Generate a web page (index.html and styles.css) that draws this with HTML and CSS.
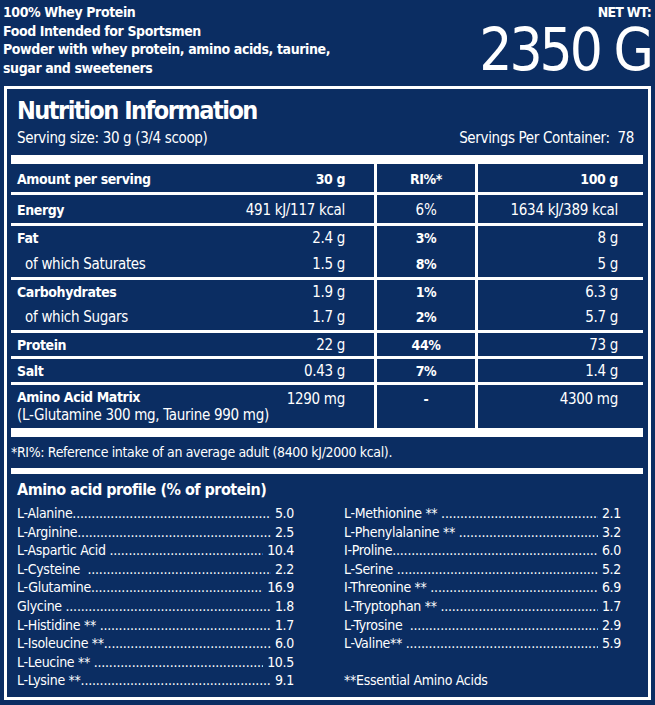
FILE: index.html
```html
<!DOCTYPE html>
<html lang="en">
<head>
<meta charset="utf-8">
<title>100% Whey Protein – Nutrition Information</title>
<link rel="stylesheet" href="styles.css">
</head>
<body>
<div class="page">
  <header class="top">
    <div class="desc">
      <div>100% Whey Protein</div>
      <div>Food Intended for Sportsmen</div>
      <div>Powder with whey protein, amino acids, taurine,</div>
      <div>sugar and sweeteners</div>
    </div>
    <div class="net">
      <div class="net-label">NET WT:</div>
      <div class="net-value">2350 G</div>
    </div>
  </header>

  <section class="panel">
    <h1 class="title">Nutrition Information</h1>
    <div class="serving">
      <span>Serving size: 30 g (3/4 scoop)</span>
      <span>Servings Per Container:&nbsp; 78</span>
    </div>
    <div class="bar top-bar"></div>

    <div class="nt">
      <div class="row head rule">
        <div class="c-label">Amount per serving</div>
        <div class="c-val">30 g</div>
        <div class="c-ri">RI%*</div>
        <div class="c-100">100 g</div>
      </div>
      <div class="row energy rule">
        <div class="c-label b">Energy</div>
        <div class="c-val">491 kJ/117 kcal</div>
        <div class="c-ri">6%</div>
        <div class="c-100">1634 kJ/389 kcal</div>
      </div>
      <div class="row fat">
        <div class="c-label b">Fat</div>
        <div class="c-val">2.4 g</div>
        <div class="c-ri b">3%</div>
        <div class="c-100">8 g</div>
      </div>
      <div class="row sub rule">
        <div class="c-label ind">of which Saturates</div>
        <div class="c-val">1.5 g</div>
        <div class="c-ri b">8%</div>
        <div class="c-100">5 g</div>
      </div>
      <div class="row carb">
        <div class="c-label b">Carbohydrates</div>
        <div class="c-val">1.9 g</div>
        <div class="c-ri b">1%</div>
        <div class="c-100">6.3 g</div>
      </div>
      <div class="row sub rule">
        <div class="c-label ind">of which Sugars</div>
        <div class="c-val">1.7 g</div>
        <div class="c-ri b">2%</div>
        <div class="c-100">5.7 g</div>
      </div>
      <div class="row single rule">
        <div class="c-label b">Protein</div>
        <div class="c-val">22 g</div>
        <div class="c-ri b">44%</div>
        <div class="c-100">73 g</div>
      </div>
      <div class="row single rule">
        <div class="c-label b">Salt</div>
        <div class="c-val">0.43 g</div>
        <div class="c-ri b">7%</div>
        <div class="c-100">1.4 g</div>
      </div>
      <div class="row matrix">
        <div class="c-label"><span class="b">Amino Acid Matrix</span><br>(L-Glutamine 300 mg, Taurine 990 mg)</div>
        <div class="c-val">1290 mg</div>
        <div class="c-ri b">-</div>
        <div class="c-100">4300 mg</div>
      </div>
    </div>
    <div class="bar"></div>

    <p class="note">*RI%: Reference intake of an average adult (8400 kJ/2000 kcal).</p>
    <div class="bar thin"></div>

    <div class="amino">
      <h2 class="amino-title">Amino acid profile (% of protein)</h2>
      <div class="amino-cols">
        <ul class="aa">
          <li><span class="n">L-Alanine</span><span class="d"></span><span class="v">5.0</span></li>
          <li><span class="n">L-Arginine</span><span class="d"></span><span class="v">2.5</span></li>
          <li><span class="n">L-Aspartic Acid&nbsp;</span><span class="d"></span><span class="v">10.4</span></li>
          <li><span class="n">L-Cysteine&nbsp;&nbsp;</span><span class="d"></span><span class="v">2.2</span></li>
          <li><span class="n">L-Glutamine</span><span class="d"></span><span class="v">16.9</span></li>
          <li><span class="n">Glycine&nbsp;</span><span class="d"></span><span class="v">1.8</span></li>
          <li><span class="n">L-Histidine **&nbsp;</span><span class="d"></span><span class="v">1.7</span></li>
          <li><span class="n">L-Isoleucine **</span><span class="d"></span><span class="v">6.0</span></li>
          <li><span class="n">L-Leucine **&nbsp;</span><span class="d"></span><span class="v">10.5</span></li>
          <li><span class="n">L-Lysine **</span><span class="d"></span><span class="v">9.1</span></li>
        </ul>
        <ul class="aa">
          <li><span class="n">L-Methionine **&nbsp;</span><span class="d"></span><span class="v">2.1</span></li>
          <li><span class="n">L-Phenylalanine **&nbsp;</span><span class="d"></span><span class="v">3.2</span></li>
          <li><span class="n">I-Proline</span><span class="d"></span><span class="v">6.0</span></li>
          <li><span class="n">L-Serine&nbsp;</span><span class="d"></span><span class="v">5.2</span></li>
          <li><span class="n">I-Threonine **&nbsp;</span><span class="d"></span><span class="v">6.9</span></li>
          <li><span class="n">L-Tryptophan **&nbsp;</span><span class="d"></span><span class="v">1.7</span></li>
          <li><span class="n">L-Tyrosine&nbsp;&nbsp;</span><span class="d"></span><span class="v">2.9</span></li>
          <li><span class="n">L-Valine**&nbsp;</span><span class="d"></span><span class="v">5.9</span></li>
          <li class="blank"></li>
          <li class="ess">**Essential Amino Acids</li>
        </ul>
      </div>
    </div>
  </section>
</div>
</body>
</html>
```

FILE: styles.css
```css
* { box-sizing: border-box; }

html, body {
  margin: 0;
  padding: 0;
}

body {
  background: #0b2d62;
  color: #fff;
  font-family: "Liberation Sans Narrow", "DejaVu Sans Condensed", "Liberation Sans", Arial, sans-serif;
}

.page {
  width: 655px;
  height: 705px;
  overflow: hidden;
}

/* ---------- header ---------- */
.top {
  display: flex;
  justify-content: space-between;
  height: 86px;
  padding: 3px 4px 0 3px;
}

.desc {
  font-weight: bold;
  font-size: 14px;
  letter-spacing: -0.4px;
  line-height: 18.7px;
}

.net {
  text-align: right;
}

.net-label {
  font-weight: bold;
  font-size: 14px;
  letter-spacing: -0.8px;
  line-height: 18px;
}

.net-value {
  font-size: 58px;
  letter-spacing: -3px;
  line-height: 52px;
  margin-top: 3px;
}

/* ---------- panel ---------- */
.panel {
  margin: 0 4px;
  height: 614px;
  border: 3px solid #fff;
  padding: 3px 5px 0 4px;
}

.title {
  margin: 0;
  padding: 2px 0 0 6px;
  font-size: 25px;
  letter-spacing: -1.5px;
  line-height: 34px;
  font-weight: bold;
}

.serving {
  display: flex;
  justify-content: space-between;
  padding: 0 9px 0 6px;
  font-size: 15px;
  letter-spacing: -0.35px;
  line-height: 20px;
}

.bar {
  height: 9px;
  background: #fff;
}

.top-bar {
  margin-top: 7px;
}

.bar.thin {
  height: 6px;
}

/* ---------- nutrition table ---------- */
.nt {
  display: flex;
  flex-direction: column;
}

.row {
  display: grid;
  grid-template-columns: 200px 163px 101px 168px;
  font-size: 15px;
  letter-spacing: -0.3px;
  line-height: 20px;
}

.row > div {
  display: flex;
  align-items: center;
}

.row.rule {
  border-bottom: 3px solid #fff;
}

.c-label {
  padding-left: 6px;
  white-space: nowrap;
}

.c-val {
  justify-content: flex-end;
  padding-right: 29px;
  white-space: nowrap;
}

.c-ri {
  justify-content: center;
  border-left: 3px solid #fff;
}

.c-100 {
  justify-content: flex-end;
  border-left: 3px solid #fff;
  padding-right: 25px;
  white-space: nowrap;
}

.b,
.head {
  font-weight: bold;
  font-size: 14px;
  letter-spacing: -0.4px;
}

.ind { padding-left: 14px; }

.head { height: 31px; }
.head > div { padding-top: 1px; }
.energy { height: 31px; }
.energy > div { padding-top: 2px; }
.fat { height: 25px; }
.fat > div { padding-bottom: 2px; }
.sub { height: 29px; }
.carb { height: 24px; }
.single { height: 26px; }

.matrix {
  height: 43px;
}

.matrix > div {
  align-items: flex-start;
  padding-top: 4px;
}

.matrix .c-label {
  display: block;
  line-height: 17.5px;
}

.note {
  margin: 0;
  height: 31px;
  padding: 5px 0 0 0;
  font-size: 14px;
  letter-spacing: -0.35px;
  line-height: 20px;
}

/* ---------- amino acids ---------- */
.amino {
  padding: 5px 0 0 6px;
}

.amino-title {
  margin: 0;
  font-size: 16px;
  letter-spacing: -0.5px;
  line-height: 22px;
  font-weight: bold;
}

.amino-cols {
  display: grid;
  grid-template-columns: 277px 277px;
  column-gap: 50px;
  margin-top: 3px;
}

.aa {
  list-style: none;
  margin: 0;
  padding: 0;
  font-size: 14px;
  letter-spacing: -0.3px;
  line-height: 18.6px;
}

.aa li {
  display: flex;
  height: 18.6px;
  white-space: nowrap;
}

.aa .d {
  flex: 1;
  overflow: hidden;
  letter-spacing: -0.2px;
}

.aa .d::before {
  content: "......................................................................................................................................................";
}

.aa .v {
  padding-left: 4px;
}

.aa .ess {
  display: block;
}
```
